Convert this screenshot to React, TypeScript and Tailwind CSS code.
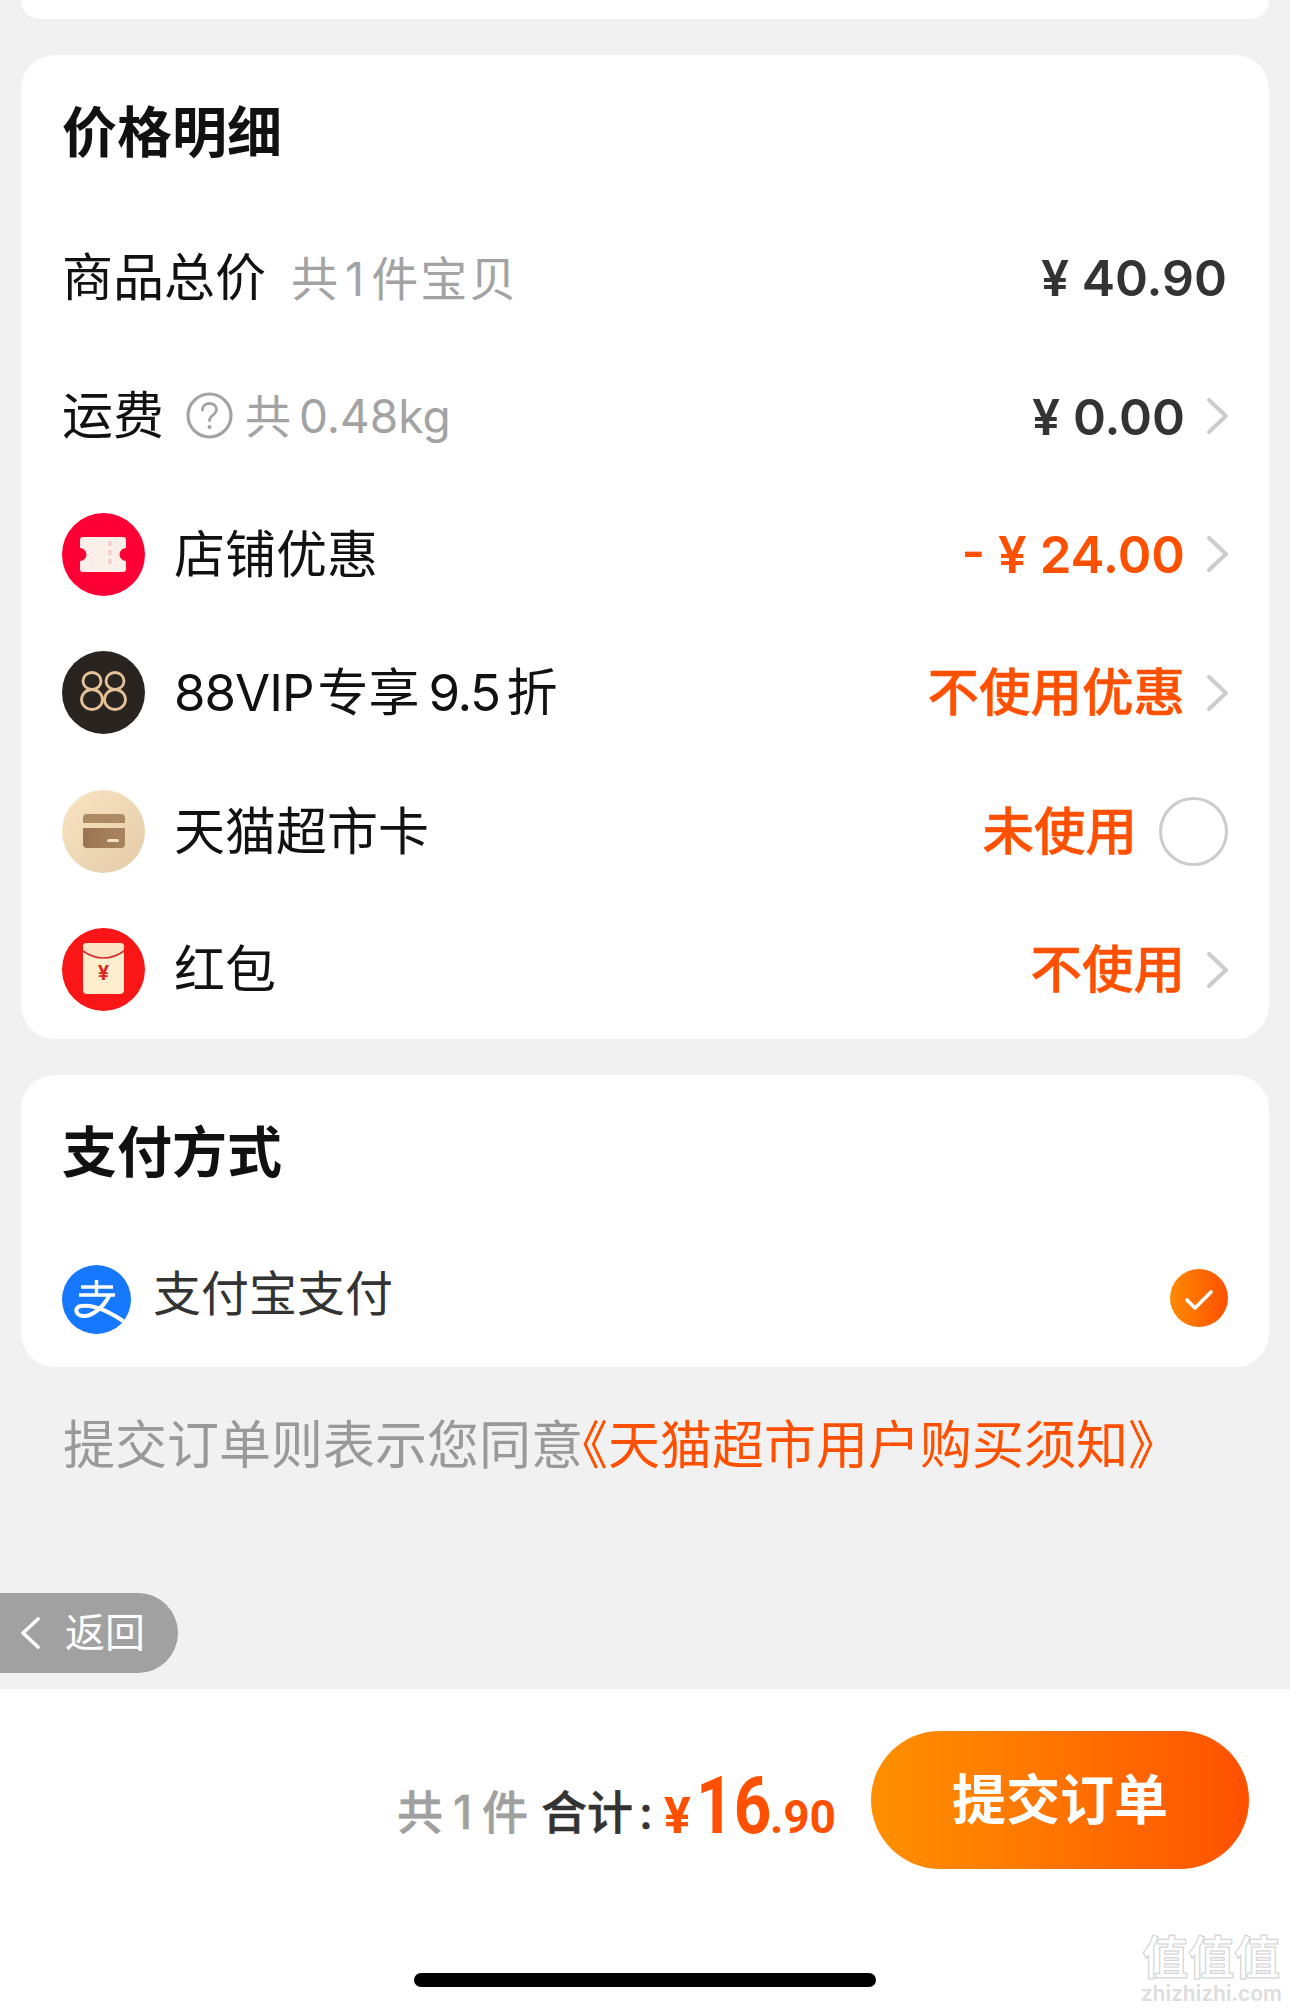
import { ReactNode } from 'react';

const Chevron = () => (
  <svg width="21" height="36" viewBox="0 0 21 36" fill="none" className="shrink-0">
    <path d="M2 2l17 16L2 34" stroke="#cccccc" strokeWidth="4" strokeLinecap="round" strokeLinejoin="round" />
  </svg>
);

const TicketIcon = () => (
  <svg width="83" height="83" viewBox="0 0 83 83" className="shrink-0">
    <circle cx="41.5" cy="41.5" r="41.5" fill="#ff0036" />
    <path
      d="M21 24h40a3 3 0 0 1 3 3v8a6.5 6.5 0 0 0 0 13v8a3 3 0 0 1-3 3H21a3 3 0 0 1-3-3v-8a6.5 6.5 0 0 0 0-13v-8a3 3 0 0 1 3-3z"
      fill="#fcefe9"
    />
    <path d="M48 28v27" stroke="#f4c9c4" strokeWidth="3" strokeDasharray="5 4" />
  </svg>
);

const EightEightIcon = () => (
  <svg width="83" height="83" viewBox="0 0 83 83" className="shrink-0">
    <circle cx="41.5" cy="41.5" r="41.5" fill="#2a2420" />
    <g fill="none" stroke="#e4c198" strokeWidth="2.8">
      <ellipse cx="30" cy="30" rx="9" ry="8.5" />
      <ellipse cx="30" cy="48.5" rx="10.5" ry="10" />
      <ellipse cx="53" cy="30" rx="9" ry="8.5" />
      <ellipse cx="53" cy="48.5" rx="10.5" ry="10" />
    </g>
  </svg>
);

const CardIcon = () => (
  <svg width="83" height="83" viewBox="0 0 83 83" className="shrink-0">
    <defs>
      <linearGradient id="cardBg" x1="0" y1="0" x2="1" y2="1">
        <stop offset="0" stopColor="#f9e4c2" />
        <stop offset="1" stopColor="#e4cba9" />
      </linearGradient>
      <linearGradient id="cardBody" x1="0" y1="0" x2="1" y2="0">
        <stop offset="0" stopColor="#9a7450" />
        <stop offset="1" stopColor="#a88560" />
      </linearGradient>
    </defs>
    <circle cx="41.5" cy="41.5" r="41.5" fill="url(#cardBg)" />
    <path d="M25 24h34a4 4 0 0 1 4 4v5H21v-5a4 4 0 0 1 4-4z" fill="#ab8a64" />
    <path d="M21 38h42v16a4 4 0 0 1-4 4H25a4 4 0 0 1-4-4z" fill="url(#cardBody)" />
    <rect x="45" y="49" width="12" height="3" rx="1.5" fill="#f3dfc2" />
  </svg>
);

const RedPacketIcon = () => (
  <svg width="83" height="83" viewBox="0 0 83 83" className="shrink-0">
    <circle cx="41.5" cy="41.5" r="41.5" fill="#fa1616" />
    <rect x="21" y="15" width="41" height="51" rx="4" fill="#fdedcd" />
    <path d="M21 23c7 5 15 7 20.500 7S55 28 62 23v-4a4 4 0 0 0-4-4H25a4 4 0 0 0-4 4z" fill="#fbe3c4" />
    <path d="M21 23c7 5 15 7 20.500 7S55 28 62 23" fill="none" stroke="#d2322a" strokeWidth="1.6" />
    <text x="41.500" y="52" textAnchor="middle" fontSize="20" fontWeight="700" fill="#d92a22" fontFamily="Inter, sans-serif">
      ¥
    </text>
  </svg>
);

const AlipayIcon = () => (
  <svg width="69" height="69" viewBox="0 0 69 69" className="shrink-0">
    <defs>
      <clipPath id="alipayClip">
        <circle cx="34.500" cy="34.500" r="34.500" />
      </clipPath>
    </defs>
    <circle cx="34.500" cy="34.500" r="34.500" fill="#1677ff" />
    <g clipPath="url(#alipayClip)" fill="none" stroke="#ffffff" strokeWidth="3.4">
      <path d="M19 22h32M17 30h36M34.500 15v15" />
      <path d="M47 31C41 43 29 52 21 51c-8-1-9-9-2-10 12-2 30 6 48 19" strokeWidth="4" />
    </g>
  </svg>
);

const QuestionIcon = () => (
  <svg width="47" height="47" viewBox="0 0 47 47" fill="none" className="shrink-0">
    <circle cx="23.500" cy="23.500" r="21.500" stroke="#a3a3a3" strokeWidth="3.200" />
    <path d="M16.500 18c0-4 3-6.500 7-6.500s7 2.500 7 6c0 5.500-7 5.500-7 11" stroke="#a3a3a3" strokeWidth="2.800" strokeLinecap="round" />
    <circle cx="23.500" cy="35" r="2" fill="#a3a3a3" />
  </svg>
);

const CheckIcon = () => (
  <svg width="58" height="58" viewBox="0 0 58 58" className="shrink-0">
    <defs>
      <linearGradient id="checkBg" x1="0" y1="0" x2="1" y2="0">
        <stop offset="0" stopColor="#ff8a00" />
        <stop offset="1" stopColor="#ff5000" />
      </linearGradient>
    </defs>
    <circle cx="29" cy="29" r="29" fill="url(#checkBg)" />
    <path d="M17 31l8 8 16-16" fill="none" stroke="#ffffff" strokeWidth="3.600" strokeLinecap="round" strokeLinejoin="round" />
  </svg>
);

const Row = ({ children }: { children: ReactNode }) => (
  <div className="flex h-[138.5px] items-center justify-between">{children}</div>
);

const IconRow = ({ icon, label, right }: { icon: ReactNode; label: ReactNode; right: ReactNode }) => (
  <Row>
    <div className="flex items-center gap-[29px]">
      {icon}
      <span className="text-[51px] text-[#111111]">{label}</span>
    </div>
    {right}
  </Row>
);

const ACCENT_TEXT = 'text-[51.5px] font-medium text-[#ff5000] [-webkit-text-stroke:0.5px_#ff5000]';

const Accent = ({ children, price }: { children: ReactNode; price?: boolean }) => (
  <div className="mr-[1px] flex items-center gap-[22px]">
    <span className={price ? 'text-[51px] font-semibold text-[#ff5000]' : ACCENT_TEXT}>{children}</span>
    <Chevron />
  </div>
);

const NARROW = "font-['Roboto',sans-serif] font-bold text-[#ff5000]";

export default function App() {
  return (
    <div className="relative flex h-[2012px] w-[1290px] flex-col overflow-hidden bg-[#f1f1f1] font-['Inter','Noto_Sans_CJK_SC',sans-serif] leading-none">
      <div className="mx-[21px] h-[19px] rounded-b-[34px] bg-white" />

      {/* Price details */}
      <section className="mx-[21px] mt-[36px] rounded-[34px] bg-white pl-[41px] pr-[40px]">
        <div className="flex h-[153px] items-center pt-[2px] text-[55px] font-bold text-[#111111]">价格明细</div>
        <Row>
          <div className="flex items-center gap-[25px]">
            <span className="text-[51px] text-[#111111]">商品总价</span>
            <span className="mt-[2px] text-[47px] tracking-[2px] text-[#a3a3a3]">
              共<span className="mx-[5px]">1</span>件宝贝
            </span>
          </div>
          <span className="mr-[2px] mt-[2px] text-[50px] font-semibold text-[#333333]">¥ 40.90</span>
        </Row>
        <Row>
          <div className="flex items-center">
            <span className="text-[51px] text-[#111111]">运费</span>
            <span className="ml-[22px] mr-[12px] flex">
              <QuestionIcon />
            </span>
            <span className="text-[46px] text-[#a3a3a3]">
              共<span className="ml-[8px]">0.48kg</span>
            </span>
          </div>
          <div className="mr-[1px] flex items-center gap-[22px]">
            <span className="mt-[2px] text-[50px] font-semibold text-[#333333]">¥ 0.00</span>
            <Chevron />
          </div>
        </Row>
        <IconRow icon={<TicketIcon />} label="店铺优惠" right={<Accent price>- ¥ 24.00</Accent>} />
        <IconRow
          icon={<EightEightIcon />}
          label={
            <>
              <span className="tracking-[-1px]">88VIP</span>
              <span className="ml-[4px] mr-[9px]">专享</span>
              <span className="tracking-[-1.500px]">9.5</span>
              <span className="ml-[7px]">折</span>
            </>
          }
          right={<Accent>不使用优惠</Accent>}
        />
        <IconRow
          icon={<CardIcon />}
          label="天猫超市卡"
          right={
            <div className="mr-[1px] flex items-center gap-[22px]">
              <span className={ACCENT_TEXT}>未使用</span>
              <span className="h-[69px] w-[69px] rounded-full border-[3px] border-[#cccccc]" />
            </div>
          }
        />
        <IconRow icon={<RedPacketIcon />} label="红包" right={<Accent>不使用</Accent>} />
      </section>

      {/* Payment */}
      <section className="mx-[21px] mt-[36px] rounded-[34px] bg-white pl-[41px] pr-[40px]">
        <div className="flex h-[156px] items-center pb-[2px] text-[55px] font-bold text-[#111111]">支付方式</div>
        <div className="flex h-[136px] items-center justify-between">
          <div className="flex items-center gap-[22px]">
            <AlipayIcon />
            <span className="mb-[10px] text-[48px] text-[#333333]">支付宝支付</span>
          </div>
          <span className="mb-[2px] mr-[1px] flex">
            <CheckIcon />
          </span>
        </div>
      </section>

      <p className="ml-[63px] mt-[53px] whitespace-nowrap text-[52px] text-[#999999]">
        提交订单则表示您同意<span className="-ml-[27px] text-[#ff5000]">《天猫超市用户购买须知》</span>
      </p>

      {/* Floating back pill */}
      <div className="absolute left-0 top-[1593px] flex h-[80px] w-[178px] items-center rounded-r-full bg-[#a1a1a1] pl-[20px] text-white">
        <svg width="20" height="32" viewBox="0 0 20 32" fill="none">
          <path d="M18 2L3 16l15 14" stroke="#ffffff" strokeWidth="3.600" strokeLinecap="round" strokeLinejoin="round" />
        </svg>
        <span className="ml-[25px] text-[40px]">返回</span>
      </div>

      {/* Footer */}
      <footer className="mt-auto flex h-[323px] flex-col bg-white">
        <div className="flex h-[180px] items-start justify-end pr-[41px] pt-[42px]">
          <div className="mr-[35px] mt-[35px] flex items-baseline whitespace-nowrap">
            <span className="-translate-y-[4px] text-[46px] font-medium text-[#a0a0a0] [-webkit-text-stroke:0.5px_#a0a0a0]">
              共<span className="mx-[10px]">1</span>件
            </span>
            <span className="ml-[13px] -translate-y-[4px] text-[46px] font-medium text-[#333333] [-webkit-text-stroke:0.5px_#333333]">
              合计<span className="ml-[6px]">:</span>
            </span>
            <span className={`ml-[11px] text-[50px] ${NARROW}`}>¥</span>
            <span className={`ml-[5px] inline-block w-[74px] origin-left scale-x-[0.82] text-[80px] ${NARROW}`}>16</span>
            <span className={`text-[46px] ${NARROW}`}>.90</span>
          </div>
          <button className="flex h-[138px] w-[378px] items-center justify-center rounded-full bg-gradient-to-r from-[#ff9000] to-[#ff5000] pt-[2px] text-[54px] font-bold text-white">
            提交订单
          </button>
        </div>
        <div className="mx-auto mt-[104px] h-[14px] w-[462px] rounded-full bg-black" />
      </footer>

      {/* Watermark */}
      <div className="absolute right-[8px] top-[1931px] flex flex-col items-center text-[#dddddd]">
        <span className="text-[46px] leading-[52px] font-bold text-white [-webkit-text-stroke:1px_#cfcfcf]">值值值</span>
        <span className="text-[21px] font-semibold">zhizhizhi.com</span>
      </div>
    </div>
  );
}
